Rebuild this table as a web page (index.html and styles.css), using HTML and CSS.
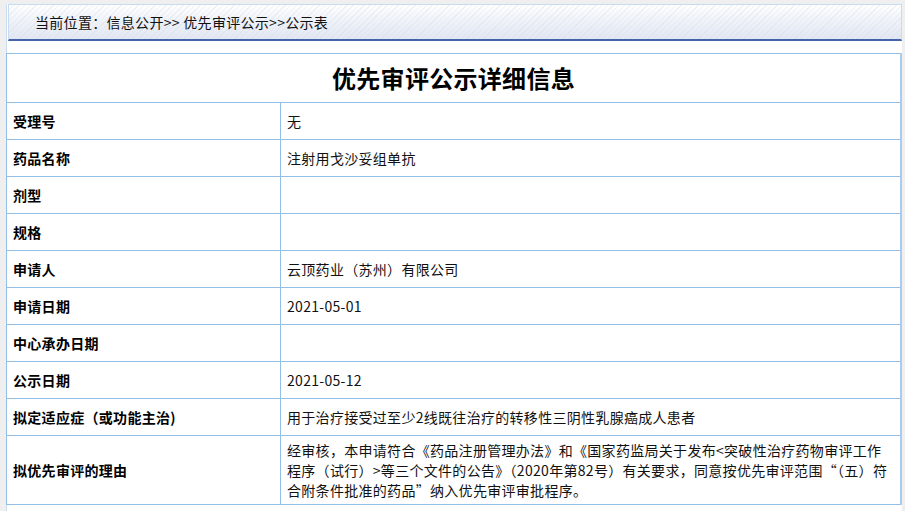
FILE: index.html
```html
<!DOCTYPE html>
<html lang="zh-CN">
<head>
<meta charset="utf-8">
<title>优先审评公示详细信息</title>
<link rel="stylesheet" href="styles.css">
</head>
<body>
<div class="page">
  <div class="crumb">当前位置：信息公开&gt;&gt; 优先审评公示&gt;&gt;公示表</div>
  <table class="detail">
    <colgroup><col class="col-label"><col class="col-value"></colgroup>
    <tr><td colspan="2" class="title">优先审评公示详细信息</td></tr>
    <tr><td class="label">受理号</td><td class="value">无</td></tr>
    <tr><td class="label">药品名称</td><td class="value">注射用戈沙妥组单抗</td></tr>
    <tr><td class="label">剂型</td><td class="value"></td></tr>
    <tr><td class="label">规格</td><td class="value"></td></tr>
    <tr><td class="label">申请人</td><td class="value">云顶药业（苏州）有限公司</td></tr>
    <tr><td class="label">申请日期</td><td class="value">2021-05-01</td></tr>
    <tr><td class="label">中心承办日期</td><td class="value"></td></tr>
    <tr><td class="label">公示日期</td><td class="value">2021-05-12</td></tr>
    <tr><td class="label">拟定适应症（或功能主治)</td><td class="value">用于治疗接受过至少2线既往治疗的转移性三阴性乳腺癌成人患者</td></tr>
    <tr><td class="label">拟优先审评的理由</td><td class="value">经审核，本申请符合《药品注册管理办法》和《国家药监局关于发布&lt;突破性治疗药物审评工作<br>程序（试行）&gt;等三个文件的公告》（2020年第82号）有关要求，同意按优先审评范围“（五）符<br>合附条件批准的药品”纳入优先审评审批程序。</td></tr>
  </table>
</div>
</body>
</html>
```
FILE: styles.css
```css
html, body {
  margin: 0;
  padding: 0;
}
body {
  background: #efefef;
  font-family: "Microsoft YaHei", "Noto Sans CJK SC", "Liberation Sans", sans-serif;
  font-size: 14px;
  color: #000;
  padding-top: 4px;
  height: 507px;
  overflow: hidden;
}
.page {
  margin-left: 6px;
  width: 896px;
  background: #fff;
  border-left: 1px solid #c9dcf0;
  box-sizing: border-box;
  min-height: 510px;
}
.crumb {
  margin-left: 1px;
  width: 894px;
  box-sizing: border-box;
  height: 37px;
  border: 1px solid #c9dbef;
  border-bottom: 2px solid #4563a8;
  background:
    repeating-linear-gradient(135deg, rgba(255,255,255,0) 0 3px, rgba(210,218,235,0.35) 3px 4px),
    linear-gradient(to bottom, #ffffff 0%, #f1f4f9 40%, #e2e7f2 100%);
  padding-left: 26px;
  line-height: 34px;
  font-size: 14px;
  letter-spacing: 0.3px;
  color: #111;
}
.detail {
  margin-top: 12px;
  margin-left: -1px;
  width: 896px;
  border-collapse: collapse;
  table-layout: fixed;
  border-right: 2px solid #a9cbec;
}
.col-label {
  width: 274px;
}
.detail td {
  border: 1px solid #93bfe6;
  padding: 4px 6px;
  height: 28px;
  line-height: 20px;
  vertical-align: middle;
  overflow: hidden;
}
.detail td.title {
  height: 40px;
  text-align: center;
  font-size: 24px;
  font-weight: bold;
  line-height: 32px;
  padding-top: 4px;
  padding-bottom: 4px;
  letter-spacing: 0.3px;
}
.detail td.label {
  font-weight: bold;
  letter-spacing: 0.3px;
}
.detail td.value {
  color: #111;
  letter-spacing: 0.3px;
  white-space: nowrap;
}
```
